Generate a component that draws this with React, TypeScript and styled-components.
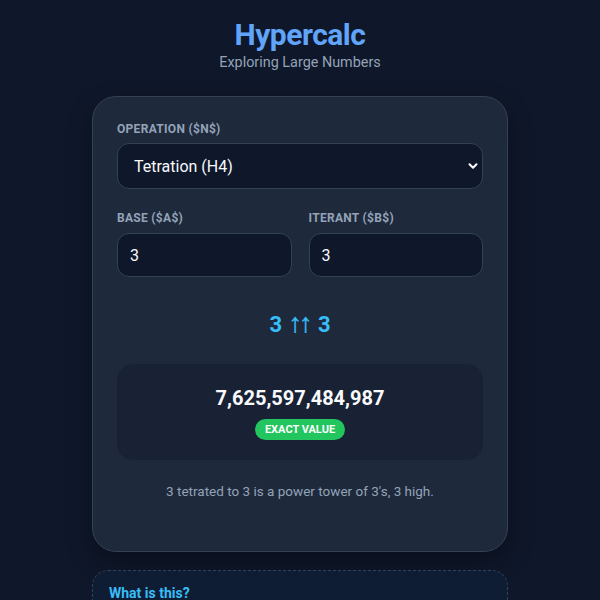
import React from "react";
import styled, { createGlobalStyle } from "styled-components";
import { ChevronDown } from "lucide-react";

const Global = createGlobalStyle`
  html, body { margin: 0; padding: 0; background: #0f172a; }
  body { font-family: Roboto, "Liberation Sans", Arial, sans-serif; color: #f1f5f9; }
  * { box-sizing: border-box; }
`;

const Page = styled.div`
  width: 416px;
  margin: 0 auto;
  padding-top: 17px;
  display: flex;
  flex-direction: column;
`;

const Header = styled.header`
  text-align: center;
  margin-bottom: 23px;
`;

const Title = styled.h1`
  margin: 0;
  font-size: 30px;
  line-height: 36px;
  font-weight: 700;
  letter-spacing: -0.5px;
  color: #60a5fa;
`;

const Subtitle = styled.p`
  margin: 0;
  font-size: 14.4px;
  line-height: 20px;
  color: #94a3b8;
`;

const Card = styled.section`
  background: #1e293b;
  border: 1px solid #334155;
  border-radius: 24px;
  padding: 24px 24px 50px;
  box-shadow: 0 10px 25px rgba(0, 0, 0, 0.35);
  display: flex;
  flex-direction: column;
`;

const Field = styled.label<{ $gap?: number }>`
  display: flex;
  flex-direction: column;
  gap: ${(p) => p.$gap ?? 7}px;
  min-width: 0;
`;

const Label = styled.span`
  font-size: 12px;
  line-height: 16px;
  font-weight: 700;
  letter-spacing: 0.3px;
  text-transform: uppercase;
  color: #94a3b8;
`;

const SelectWrap = styled.div`
  position: relative;
`;

const Select = styled.select`
  appearance: none;
  width: 100%;
  height: 46px;
  background: #0f172a;
  border: 1px solid #334155;
  border-radius: 12px;
  color: #f8fafc;
  font-family: inherit;
  font-size: 16px;
  padding: 0 16px;
  outline: none;
`;

const Chevron = styled.span`
  position: absolute;
  right: 3px;
  top: 50%;
  transform: translateY(-50%);
  display: flex;
  color: #f8fafc;
  pointer-events: none;
`;

const Row = styled.div`
  display: grid;
  grid-template-columns: 1fr 1fr;
  gap: 17px;
  margin-top: 21px;
`;

const Input = styled.input`
  width: 100%;
  height: 44px;
  background: #0f172a;
  border: 1px solid #334155;
  border-radius: 12px;
  color: #f8fafc;
  font-family: inherit;
  font-size: 16px;
  padding: 0 12px;
  outline: none;
`;

const Notation = styled.div`
  margin-top: 34px;
  text-align: center;
  font-size: 22px;
  line-height: 28px;
  height: 28px;
  font-weight: 700;
  color: #38bdf8;
`;

const Arrows = styled.span`
  font-weight: 400;
  font-size: 27px;
  line-height: 0;
  letter-spacing: -3px;
  margin-left: 1px;
  margin-right: 3px;
  -webkit-text-stroke: 0.4px #38bdf8;
`;

const ResultBox = styled.div`
  margin-top: 25px;
  background: #182234;
  border-radius: 16px;
  padding: 20px;
  display: flex;
  flex-direction: column;
  align-items: center;
  gap: 7px;
`;

const Value = styled.div`
  font-size: 20px;
  line-height: 28px;
  font-weight: 700;
  color: #f8fafc;
`;

const Badge = styled.span`
  background: #22c55e;
  color: #fff;
  font-size: 11px;
  line-height: 21px;
  font-weight: 700;
  padding: 0 10px;
  border-radius: 999px;
  text-transform: uppercase;
`;

const Description = styled.p`
  margin: 21px 0 0;
  text-align: center;
  font-size: 13.5px;
  line-height: 20px;
  color: #94a3b8;
`;

const InfoCard = styled.section`
  margin-top: 18px;
  background: #0f1d34;
  border: 1px dashed #334155;
  border-radius: 16px;
  padding: 12px 16px;
`;

const InfoTitle = styled.h2`
  margin: 0;
  font-size: 14px;
  line-height: 20px;
  font-weight: 700;
  color: #38bdf8;
`;

export default function App() {
  return (
    <>
      <Global />
      <Page>
        <Header>
          <Title>Hypercalc</Title>
          <Subtitle>Exploring Large Numbers</Subtitle>
        </Header>
        <Card>
          <Field $gap={6}>
            <Label>Operation ($N$)</Label>
            <SelectWrap>
              <Select defaultValue="4">
                <option value="1">Addition (H1)</option>
                <option value="2">Multiplication (H2)</option>
                <option value="3">Exponentiation (H3)</option>
                <option value="4">Tetration (H4)</option>
              </Select>
              <Chevron>
                <ChevronDown size={14} strokeWidth={3.5} />
              </Chevron>
            </SelectWrap>
          </Field>
          <Row>
            <Field>
              <Label>Base ($A$)</Label>
              <Input defaultValue="3" />
            </Field>
            <Field>
              <Label>Iterant ($B$)</Label>
              <Input defaultValue="3" />
            </Field>
          </Row>
          <Notation>
            3 <Arrows>↑↑</Arrows> 3
          </Notation>
          <ResultBox>
            <Value>7,625,597,484,987</Value>
            <Badge>Exact Value</Badge>
          </ResultBox>
          <Description>3 tetrated to 3 is a power tower of 3's, 3 high.</Description>
        </Card>
        <InfoCard>
          <InfoTitle>What is this?</InfoTitle>
        </InfoCard>
      </Page>
    </>
  );
}
